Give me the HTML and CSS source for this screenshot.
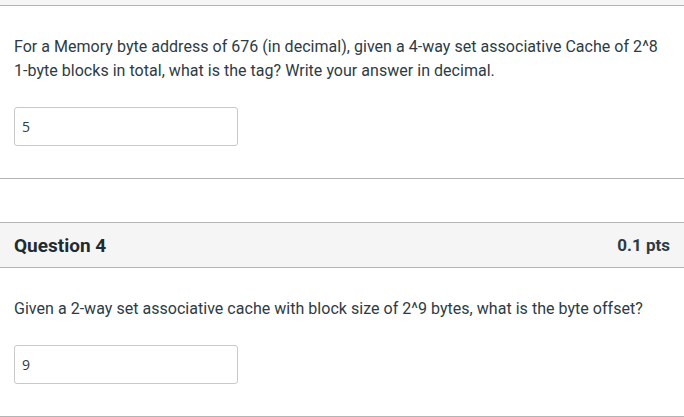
FILE: index.html
```html
<!DOCTYPE html>
<html lang="en">
<head>
<meta charset="utf-8">
<title>Quiz</title>
<link rel="stylesheet" href="styles.css">
</head>
<body>
<div class="question">
  <div class="q-header stub"></div>
  <div class="q-body">
    <p class="q-text">For a Memory byte address of 676 (in decimal), given a 4-way set associative Cache of 2^8 1-byte blocks in total, what is the tag? Write your answer in decimal.</p>
    <input class="answer" type="text" value="5">
  </div>
</div>
<div class="question">
  <div class="q-header">
    <h3 class="q-title">Question 4</h3>
    <span class="q-points">0.1 pts</span>
  </div>
  <div class="q-body">
    <p class="q-text">Given a 2-way set associative cache with block size of 2^9 bytes, what is the byte offset?</p>
    <input class="answer" type="text" value="9">
  </div>
</div>
</body>
</html>
```

FILE: styles.css
```css
html, body {
  margin: 0;
  padding: 0;
  background: #ffffff;
}
body {
  font-family: Roboto, "Liberation Sans", sans-serif;
  color: #2d3b45;
  width: 684px;
}
.question {
  border-bottom: 1px solid #b4b4b4;
}
.question + .question {
  margin-top: 43px;
}
.q-header {
  display: flex;
  align-items: center;
  justify-content: space-between;
  height: 44px;
  padding: 0 14px 0 14px;
  background: #f5f5f5;
  border-top: 1px solid #b4b4b4;
  border-bottom: 1px solid #b4b4b4;
}
.q-header.stub {
  height: 5px;
  border-top: none;
}
.q-title {
  margin: 0;
  font-size: 19px;
  font-weight: 700;
  color: #1f2b33;
}
.q-points {
  font-size: 17px;
  font-weight: 700;
  color: #2d3b45;
}
.q-body {
  padding: 29px 14px 32px 14px;
}
.q-text {
  margin: 0 0 24px 0;
  font-size: 16px;
  line-height: 24px;
  letter-spacing: 0.03px;
}
.answer {
  display: block;
  box-sizing: border-box;
  width: 224px;
  height: 39px;
  margin: 0;
  padding: 0 7px;
  border: 1px solid #c9c9c9;
  border-radius: 3px;
  background: #fff;
  font-family: "Open Sans", "DejaVu Sans", sans-serif;
  font-size: 14px;
  color: #2d3b45;
  outline: none;
}
```
